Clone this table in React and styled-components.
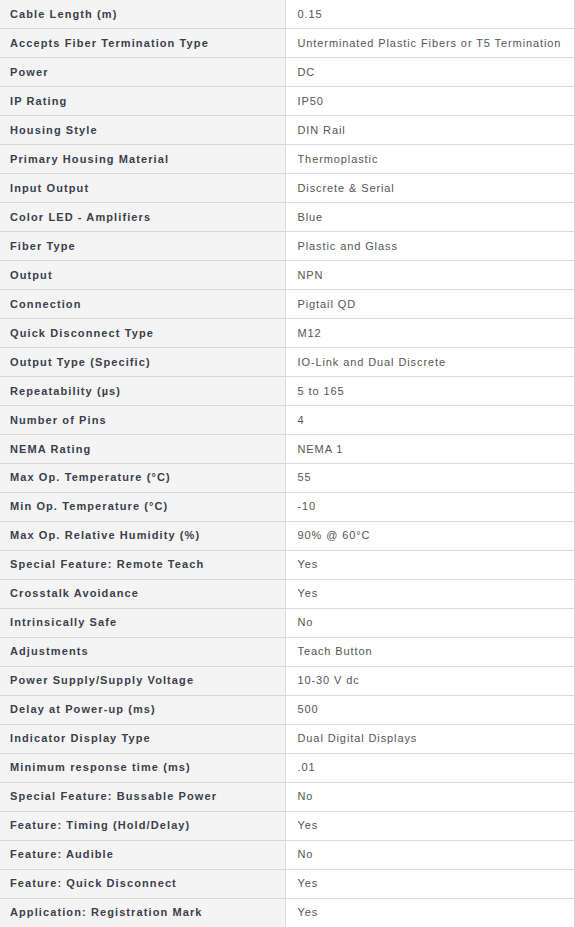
import React from "react";
import styled, { createGlobalStyle } from "styled-components";

const specs = [
  ["Cable Length (m)", "0.15"],
  ["Accepts Fiber Termination Type", "Unterminated Plastic Fibers or T5 Termination"],
  ["Power", "DC"],
  ["IP Rating", "IP50"],
  ["Housing Style", "DIN Rail"],
  ["Primary Housing Material", "Thermoplastic"],
  ["Input Output", "Discrete & Serial"],
  ["Color LED - Amplifiers", "Blue"],
  ["Fiber Type", "Plastic and Glass"],
  ["Output", "NPN"],
  ["Connection", "Pigtail QD"],
  ["Quick Disconnect Type", "M12"],
  ["Output Type (Specific)", "IO-Link and Dual Discrete"],
  ["Repeatability (µs)", "5 to 165"],
  ["Number of Pins", "4"],
  ["NEMA Rating", "NEMA 1"],
  ["Max Op. Temperature (°C)", "55"],
  ["Min Op. Temperature (°C)", "-10"],
  ["Max Op. Relative Humidity (%)", "90% @ 60°C"],
  ["Special Feature: Remote Teach", "Yes"],
  ["Crosstalk Avoidance", "Yes"],
  ["Intrinsically Safe", "No"],
  ["Adjustments", "Teach Button"],
  ["Power Supply/Supply Voltage", "10-30 V dc"],
  ["Delay at Power-up (ms)", "500"],
  ["Indicator Display Type", "Dual Digital Displays"],
  ["Minimum response time (ms)", ".01"],
  ["Special Feature: Bussable Power", "No"],
  ["Feature: Timing (Hold/Delay)", "Yes"],
  ["Feature: Audible", "No"],
  ["Feature: Quick Disconnect", "Yes"],
  ["Application: Registration Mark", "Yes"],
];

const GlobalStyle = createGlobalStyle`
  body {
    margin: 0;
    background: #fff;
    font-family: "Liberation Sans", Arial, sans-serif;
  }
`;

const Table = styled.table`
  width: 575px;
  border-collapse: collapse;
  table-layout: fixed;
`;

const Row = styled.tr`
  height: 28.97px;
  border-bottom: 1px solid #d9d9e3;
`;

const Label = styled.td`
  width: 285px;
  padding: 0 0 1px 10px;
  background: #f4f4f4;
  border-right: 1px solid #d9d9e3;
  color: #3b3f4c;
  font-size: 11px;
  font-weight: bold;
  letter-spacing: 1.1px;
  white-space: nowrap;
  box-sizing: border-box;
`;

const Value = styled.td`
  padding: 0 0 1px 12px;
  background: #fff;
  border-right: 1px solid #d9d9e3;
  color: #555;
  font-size: 11px;
  letter-spacing: 0.9px;
  white-space: nowrap;
`;

export default function App() {
  return (
    <>
      <GlobalStyle />
      <Table>
        <tbody>
          {specs.map(([label, value]) => (
            <Row key={label}>
              <Label>{label}</Label>
              <Value>{value}</Value>
            </Row>
          ))}
        </tbody>
      </Table>
    </>
  );
}
